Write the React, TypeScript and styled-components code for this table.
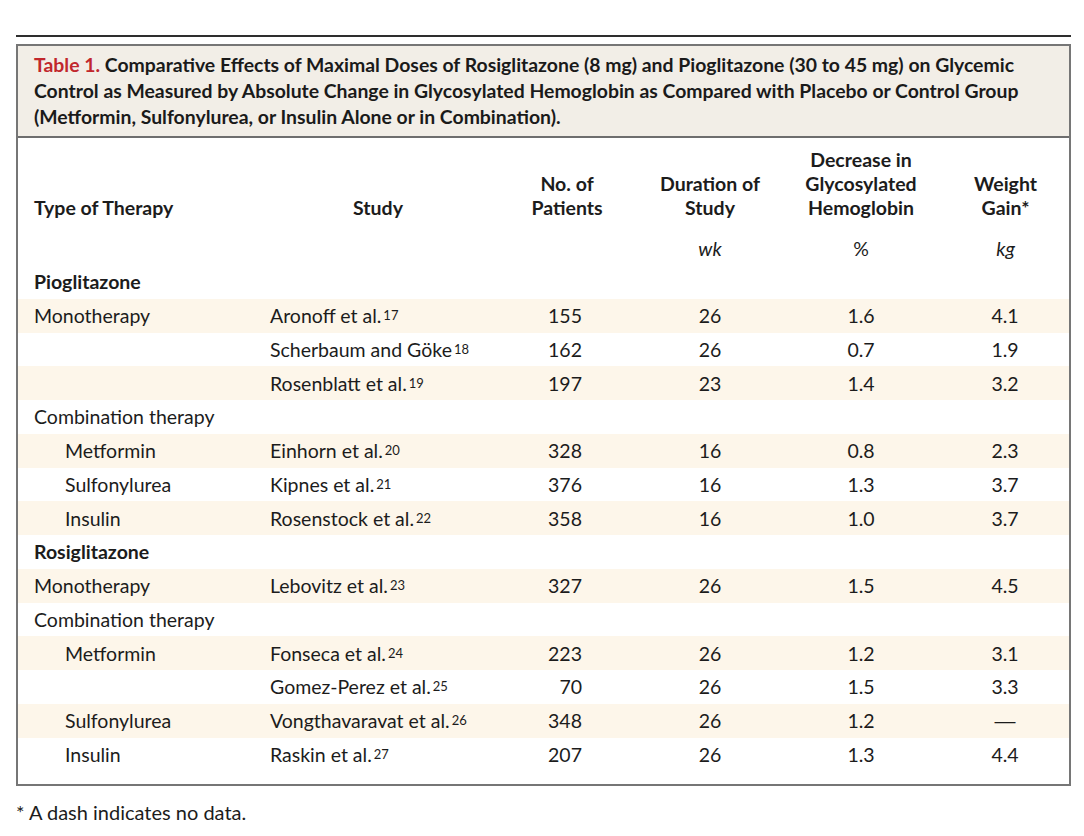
import React from "react";
import styled, { createGlobalStyle } from "styled-components";

const GlobalStyle = createGlobalStyle`
  body {
    margin: 0;
    background: #ffffff;
    font-family: "Lato", "Liberation Sans", sans-serif;
    color: #1c1c1c;
  }
`;

const Page = styled.div`
  width: 1055px;
  padding: 35px 0 0 16px;
`;

const TopRule = styled.div`
  border-top: 2px solid #2e2e2e;
  margin-bottom: 7px;
`;

const Frame = styled.div`
  border: 2px solid #767676;
  padding-bottom: 13px;
`;

const TitleBar = styled.div`
  background: #f2eee7;
  border-bottom: 2px solid #6e6e6e;
  padding: 6px 16px 6px 16px;
  font-size: 19.4px;
  font-weight: 700;
  line-height: 26px;
  color: #1a1a1a;
`;

const TableNo = styled.span`
  color: #c1272d;
`;

const Table = styled.table`
  width: 100%;
  border-collapse: collapse;
  table-layout: fixed;
  font-size: 19.5px;
`;

const HeadCell = styled.th<{ $align?: "left" | "center" }>`
  text-align: ${(p) => p.$align ?? "center"};
  vertical-align: bottom;
  font-weight: 700;
  line-height: 24px;
  padding: 10px 0 0 0;
  &:first-child {
    padding-left: 16px;
  }
  &:last-child {
    padding-left: 10px;
  }
`;

const UnitCell = styled.td<{ $upright?: boolean }>`
  text-align: center;
  font-style: ${(p) => (p.$upright ? "normal" : "italic")};
  line-height: 24px;
  padding: 17px 0 4px 0;
  &:last-child {
    padding-left: 10px;
  }
`;

const BodyRow = styled.tr<{ $shaded: boolean }>`
  height: 33.75px;
  background: ${(p) => (p.$shaded ? "#fdf6ea" : "transparent")};
`;

const TherapyCell = styled.td<{ $indent?: boolean; $group?: boolean }>`
  padding: 0 0 0 ${(p) => (p.$indent ? 47 : 16)}px;
  font-weight: ${(p) => (p.$group ? 700 : 400)};
  white-space: nowrap;
`;

const StudyCell = styled.td`
  padding: 0 0 0 18px;
  white-space: nowrap;
`;

const Ref = styled.sup`
  font-size: 13px;
  vertical-align: 3px;
  line-height: 0;
  margin-left: 2px;
`;

const CountCell = styled.td`
  text-align: right;
  padding-right: 48px;
`;

const NumCell = styled.td`
  text-align: center;
  &:last-child {
    padding-left: 10px;
  }
`;

const Dash = styled.span`
  font-family: "Liberation Sans", sans-serif;
  font-size: 21px;
`;

const Footnote = styled.p`
  margin: 14px 0 0 0;
  font-size: 20px;
  line-height: 24px;
`;

type Entry = {
  group?: string;
  therapy?: string;
  indent?: boolean;
  study?: string;
  ref?: number;
  n?: string;
  wk?: string;
  dec?: string;
  wt?: string;
};

const rows: Entry[] = [
  { group: "Pioglitazone" },
  { therapy: "Monotherapy", study: "Aronoff et al.", ref: 17, n: "155", wk: "26", dec: "1.6", wt: "4.1" },
  { study: "Scherbaum and Göke", ref: 18, n: "162", wk: "26", dec: "0.7", wt: "1.9" },
  { study: "Rosenblatt et al.", ref: 19, n: "197", wk: "23", dec: "1.4", wt: "3.2" },
  { therapy: "Combination therapy" },
  { therapy: "Metformin", indent: true, study: "Einhorn et al.", ref: 20, n: "328", wk: "16", dec: "0.8", wt: "2.3" },
  { therapy: "Sulfonylurea", indent: true, study: "Kipnes et al.", ref: 21, n: "376", wk: "16", dec: "1.3", wt: "3.7" },
  { therapy: "Insulin", indent: true, study: "Rosenstock et al.", ref: 22, n: "358", wk: "16", dec: "1.0", wt: "3.7" },
  { group: "Rosiglitazone" },
  { therapy: "Monotherapy", study: "Lebovitz et al.", ref: 23, n: "327", wk: "26", dec: "1.5", wt: "4.5" },
  { therapy: "Combination therapy" },
  { therapy: "Metformin", indent: true, study: "Fonseca et al.", ref: 24, n: "223", wk: "26", dec: "1.2", wt: "3.1" },
  { study: "Gomez-Perez et al.", ref: 25, n: "70", wk: "26", dec: "1.5", wt: "3.3" },
  { therapy: "Sulfonylurea", indent: true, study: "Vongthavaravat et al.", ref: 26, n: "348", wk: "26", dec: "1.2", wt: "—" },
  { therapy: "Insulin", indent: true, study: "Raskin et al.", ref: 27, n: "207", wk: "26", dec: "1.3", wt: "4.4" },
];

export default function App() {
  return (
    <Page>
      <GlobalStyle />
      <TopRule />
      <Frame>
        <TitleBar>
          <TableNo>Table 1.</TableNo> Comparative Effects of Maximal Doses of Rosiglitazone (8 mg) and
          Pioglitazone (30 to 45 mg) on Glycemic
          <br />
          Control as Measured by Absolute Change in Glycosylated Hemoglobin as Compared with Placebo or
          Control Group
          <br />
          (Metformin, Sulfonylurea, or Insulin Alone or in Combination).
        </TitleBar>
        <Table>
          <colgroup>
            <col style={{ width: 234 }} />
            <col style={{ width: 252 }} />
            <col style={{ width: 126 }} />
            <col style={{ width: 160 }} />
            <col style={{ width: 142 }} />
            <col />
          </colgroup>
          <thead>
            <tr>
              <HeadCell $align="left">Type of Therapy</HeadCell>
              <HeadCell>Study</HeadCell>
              <HeadCell>
                No. of
                <br />
                Patients
              </HeadCell>
              <HeadCell>
                Duration of
                <br />
                Study
              </HeadCell>
              <HeadCell>
                Decrease in
                <br />
                Glycosylated
                <br />
                Hemoglobin
              </HeadCell>
              <HeadCell>
                Weight
                <br />
                Gain*
              </HeadCell>
            </tr>
            <tr>
              <UnitCell />
              <UnitCell />
              <UnitCell />
              <UnitCell>wk</UnitCell>
              <UnitCell $upright>%</UnitCell>
              <UnitCell>kg</UnitCell>
            </tr>
          </thead>
          <tbody>
            {rows.map((r, i) =>
              r.group ? (
                <BodyRow key={i} $shaded={i % 2 === 1}>
                  <TherapyCell $group colSpan={6}>
                    {r.group}
                  </TherapyCell>
                </BodyRow>
              ) : (
                <BodyRow key={i} $shaded={i % 2 === 1}>
                  <TherapyCell $indent={r.indent}>{r.therapy}</TherapyCell>
                  <StudyCell>
                    {r.study}
                    {r.ref && <Ref>{r.ref}</Ref>}
                  </StudyCell>
                  <CountCell>{r.n}</CountCell>
                  <NumCell>{r.wk}</NumCell>
                  <NumCell>{r.dec}</NumCell>
                  <NumCell>{r.wt === "—" ? <Dash>—</Dash> : r.wt}</NumCell>
                </BodyRow>
              )
            )}
          </tbody>
        </Table>
      </Frame>
      <Footnote>* A dash indicates no data.</Footnote>
    </Page>
  );
}
